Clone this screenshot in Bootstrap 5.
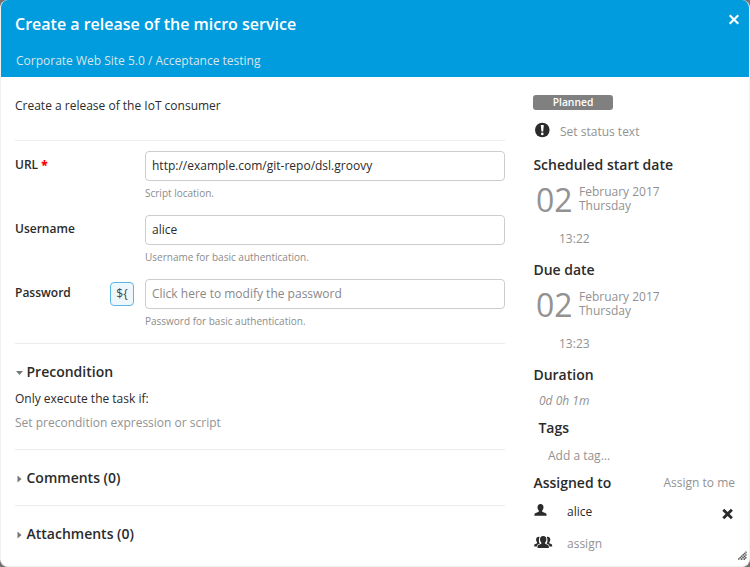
<!DOCTYPE html>
<html lang="en">
<head>
<meta charset="utf-8">
<meta name="viewport" content="width=device-width, initial-scale=1">
<title>Create a release of the micro service</title>
<link href="https://cdn.jsdelivr.net/npm/bootstrap@5.3.0/dist/css/bootstrap.min.css" rel="stylesheet">
<style>
  body { background: #77706e; font-family: "Open Sans", "Noto Sans", sans-serif; font-size: 12px; line-height: 20px; color: #2b2b2b; overflow: hidden; }
  .task-dialog { height: 567px; border-radius: 8px; background: #fff; overflow: hidden; border: 1px solid #f1f1f1; border-width: 0 1px 1px; }
  .task-head { height: 77px; background: #019cde; padding: 14px 9px 0 14px; margin: 0 -1px; border: 1px solid #019cde; border-width: 0 1px; }
  .task-title { font-size: 16px; font-weight: 600; line-height: 20px; margin: 0; }
  .task-path { color: #d9e4ea; padding: 17px 0 0 1px; }
  .main-col { width: 504px; padding-left: 14px; }
  .side-col { width: 202px; margin-left: 28px; }
  .desc { height: 63px; padding-top: 19px; }
  .rule { border-color: #ededed !important; }
  .fields { padding-top: 10px; height: 203px; }
  .field-row { height: 64px; }
  .field-label { width: 130px; padding-top: 4px; font-weight: 600; }
  .required-mark { color: #f00; font-weight: 800; }
  .field-box { height: 30px; padding: 0 6px 1px; border: 1px solid #ccc; border-radius: 4px; font-size: 12px; color: #2b2b2b; }
  .field-box::placeholder { color: #888; opacity: 1; }
  .hint { font-size: 10px; line-height: 16px; padding-top: 4px; color: #8c8c8c; }
  .var-btn { width: 24px; height: 24px; border: 1px solid #5bb8e6; border-radius: 4px; background: #eef7fc; color: #444; margin: 3px 11px 0 0; font-weight: 400; }
  .sec { font-size: 14px; font-weight: 600; line-height: 20px; margin: 0; color: #2b2b2b; }
  .side-col .sec { text-indent: .4px; }
  .fold { padding-top: 18px; height: 56px; }
  .fold-open { height: 106px; }
  .condition { padding-top: 7px; }
  .caret { width: 11.5px; height: 20px; flex: none; }
  .soft { color: #929292; }
  .status-pill { width: 80px; height: 15px; margin-top: 18px; border-radius: 3px; background: #808080; font-size: 10.3px; font-weight: 600; line-height: 15px; }
  .status-text { height: 45px; padding-top: 12px; }
  .date-block { height: 105px; }
  .date-row { height: 46px; padding-top: 5px; }
  .day { font-size: 32px; line-height: 40px; width: 46px; padding-left: 3px; }
  .month { line-height: 14px; padding-top: 5px; }
  .time { padding: 8px 0 0 26px; }
  .grip { margin: 17px -12px 0 0; }
</style>
</head>
<body>
<div class="task-dialog">
  <header class="task-head text-white">
    <div class="d-flex justify-content-between">
      <h1 class="task-title">Create a release of the micro service</h1>
      <svg width="12" height="12" viewBox="0 0 12 12" role="button" aria-label="Close"><path d="M1.700 1.200l8.600 8.600M10.300 1.200l-8.600 8.600" stroke="#fff" stroke-width="2.100"/></svg>
    </div>
    <div class="task-path">Corporate Web Site 5.0 / Acceptance testing</div>
  </header>
  <div class="d-flex">
    <main class="main-col">
      <div class="desc">Create a release of the IoT consumer</div>
      <div class="rule fields border-top">
        <div class="field-row d-flex">
          <div class="field-label">URL <span class="required-mark">*</span></div>
          <div class="flex-grow-1"><input class="field-box w-100 d-block" value="http://example.com/git-repo/dsl.groovy"><div class="hint">Script location.</div></div>
        </div>
        <div class="field-row d-flex">
          <div class="field-label">Username</div>
          <div class="flex-grow-1"><input class="field-box w-100 d-block" value="alice"><div class="hint">Username for basic authentication.</div></div>
        </div>
        <div class="field-row d-flex">
          <div class="field-label d-flex justify-content-between pt-0"><span class="pt-1">Password</span><span class="var-btn d-flex align-items-center justify-content-center">${</span></div>
          <div class="flex-grow-1"><input class="field-box w-100 d-block" placeholder="Click here to modify the password"><div class="hint">Password for basic authentication.</div></div>
        </div>
      </div>
      <section class="rule fold fold-open border-top">
        <div class="d-flex"><svg class="caret" viewBox="0 0 11.5 20"><path d="M1 9h7l-3.500 4z" fill="#777"/></svg><h2 class="sec">Precondition</h2></div>
        <div class="condition">Only execute the task if:</div>
        <div class="soft pt-1">Set precondition expression or script</div>
      </section>
      <section class="rule fold border-top">
        <div class="d-flex"><svg class="caret" viewBox="0 0 11.5 20"><path d="M2.500 7.500v7l4-3.500z" fill="#777"/></svg><h2 class="sec">Comments (0)</h2></div>
      </section>
      <section class="rule fold border-top">
        <div class="d-flex"><svg class="caret" viewBox="0 0 11.5 20"><path d="M2.500 7.500v7l4-3.500z" fill="#777"/></svg><h2 class="sec">Attachments (0)</h2></div>
      </section>
    </main>
    <aside class="side-col">
      <div class="status-pill text-white text-center">Planned</div>
      <div class="status-text d-flex">
        <svg width="27" height="20" viewBox="0 0 27 20"><circle cx="9.300" cy="8" r="7.300" fill="#2b2b2b"/><path d="M7.800 3h3l-.6 6.500H8.400z" fill="#fff"/><circle cx="9.300" cy="11.900" r="1.300" fill="#fff"/></svg>
        <span class="soft">Set status text</span>
      </div>
      <div class="date-block">
        <h2 class="sec">Scheduled start date</h2>
        <div class="date-row d-flex soft"><span class="day">02</span><span class="month">February 2017<br>Thursday</span></div>
        <div class="time soft">13:22</div>
      </div>
      <div class="date-block">
        <h2 class="sec">Due date</h2>
        <div class="date-row d-flex soft"><span class="day">02</span><span class="month">February 2017<br>Thursday</span></div>
        <div class="time soft">13:23</div>
      </div>
      <h2 class="sec">Duration</h2>
      <div class="soft fst-italic" style="padding:6px 0 0 6px">0d 0h 1m</div>
      <h2 class="sec" style="padding:7px 0 0 5px">Tags</h2>
      <div class="soft" style="padding:8px 0 0 15px">Add a tag...</div>
      <div class="d-flex justify-content-between" style="padding-top:7px"><h2 class="sec">Assigned to</h2><span class="soft">Assign to me</span></div>
      <div class="d-flex" style="padding-top:9px">
        <svg width="34" height="20" viewBox="0 0 34 20"><path transform="translate(0 -1)" d="M7.500 3c2 0 3 1.400 3 3.300 0 1.500-.6 2.600-1.300 3.300v1.200l3.600 1.500c.7.4.8 1.200.8 2.400H1.400c0-1.200.1-2 .8-2.400l3.600-1.500V9.600C5.100 8.900 4.500 7.800 4.500 6.300 4.500 4.400 5.500 3 7.500 3z" fill="#2b2b2b"/></svg>
        <span class="flex-grow-1">alice</span>
        <svg width="14" height="20" viewBox="0 0 14 20" aria-label="Remove"><path d="M2.300 7.700l8.600 8.600M10.900 7.700l-8.600 8.600" stroke="#2b2b2b" stroke-width="2.800"/></svg>
      </div>
      <div class="d-flex" style="padding-top:12px">
        <svg width="34" height="20" viewBox="0 0 34 20" fill="#2b2b2b"><path d="M10.200 2c2.300 0 3.200 1.400 3.200 3.300 0 1.500-.6 2.600-1.300 3.300v1.200l3 1.300c.7.4.8 1.200.8 2.900H4.500c0-1.700.1-2.500.8-2.900l3-1.300V8.600C7.600 7.900 7 6.800 7 5.300 7 3.400 7.900 2 10.200 2z"/><path d="M6.600 2.900C4.500 2.500 3.100 3.800 3.100 5.500c0 1.300.5 2.200 1 2.700v1L1.800 10.300c-.5.3-.6 1-.6 2.300h2.700c.2-1.300.5-1.800 1-2.100l2-.9C5.700 8.400 5.500 4.700 6.600 2.900z"/><path d="M13.800 2.900c2.100-.4 3.500.9 3.500 2.600 0 1.300-.5 2.200-1 2.700v1l2.300 1.100c.5.300.6 1 .6 2.300h-2.700c-.2-1.300-.5-1.800-1-2.100l-2-.9c1.200-1.200 1.400-4.900.3-6.700z"/></svg>
        <span class="soft flex-grow-1">assign</span>
        <svg class="grip" width="9" height="9" viewBox="0 0 9 9"><path d="M.3 8.500L8.500.8M3 8.700L8.500 3.500M5.700 8.700L8.500 6.200" stroke="#555" stroke-width="1.500" stroke-dasharray="1.600 .4"/></svg>
      </div>
    </aside>
  </div>
</div>
<script src="https://cdn.jsdelivr.net/npm/bootstrap@5.3.0/dist/js/bootstrap.bundle.min.js"></script>
</body>
</html>
